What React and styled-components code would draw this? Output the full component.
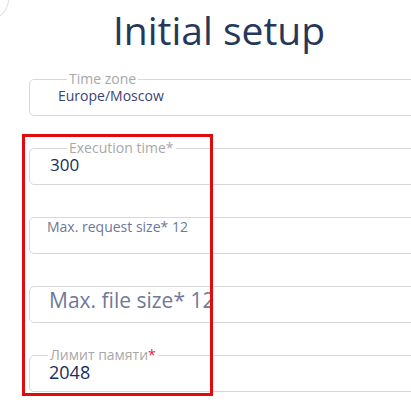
import React from 'react';
import styled, { createGlobalStyle } from 'styled-components';

const GlobalStyle = createGlobalStyle`
	html, body {
		margin: 0;
		padding: 0;
		background: #fff;
		overflow: hidden;
	}
	body {
		font-family: "Open Sans", "Noto Sans", sans-serif;
	}
`;

const Page = styled.div`
	position: relative;
	width: 411px;
	height: 409px;
	overflow: hidden;
`;

const CornerButton = styled.div`
	position: absolute;
	left: -35px;
	top: -23px;
	width: 42px;
	height: 42px;
	border-radius: 50%;
	border: 1px solid #dcdcdc;
`;

const Title = styled.h1`
	margin: 6px 0 0;
	padding-left: 27px;
	text-align: center;
	font-size: 39px;
	line-height: 48px;
	font-weight: 400;
	color: #263859;
`;

const Form = styled.div`
	display: flex;
	flex-direction: column;
	gap: 32px;
	margin-top: 25px;
	padding-left: 29px;
`;

const Box = styled.div`
	position: relative;
	box-sizing: border-box;
	width: 460px;
	height: 37px;
	border: 1px solid #d8d8d8;
	border-radius: 5px;
	display: flex;
	align-items: flex-start;
	padding-left: ${p => p.$pad}px;
	padding-top: ${p => p.$top}px;
`;

const Label = styled.span`
	position: absolute;
	top: -9px;
	left: ${p => p.$left}px;
	padding: 0 2px;
	background: #fff;
	font-size: 14px;
	line-height: 15px;
	color: #a8a8a8;
	white-space: nowrap;
`;

const Star = styled.span`
	color: #e8173a;
`;

const Value = styled.span`
	font-size: ${p => p.$size}px;
	line-height: ${p => p.$lh || 1.3};
	color: ${p => p.$color};
	white-space: nowrap;
`;

const Clipped = styled(Value)`
	max-width: ${p => p.$clip}px;
	overflow: hidden;
`;

const Highlight = styled.div`
	position: absolute;
	left: 22px;
	top: 134px;
	width: 185px;
	height: 256px;
	border: 3px solid #e20a0a;
	pointer-events: none;
`;

const App = () => {
	return (
		<Page>
			<GlobalStyle />
			<CornerButton />
			<Title>Initial setup</Title>
			<Form>
				<Box $pad={28} $top={7}>
					<Label $left={37}>Time zone</Label>
					<Value $size={14} $color="#3c4374">Europe/Moscow</Value>
				</Box>
				<Box $pad={20} $top={5}>
					<Label $left={37}>Execution time*</Label>
					<Value $size={17} $color="#1c2b5a">300</Value>
				</Box>
				<Box $pad={17} $top={0}>
					<Value $size={14} $color="#6f7898">Max. request size* 12</Value>
				</Box>
				<Box $pad={19} $top={-4}>
					<Clipped $size={21} $color="#6f7898" $clip={162}>Max. file size* 12</Clipped>
				</Box>
				<Box $pad={19} $top={6}>
					<Label $left={18}>Лимит памяти<Star>*</Star></Label>
					<Value $size={18} $lh={1.2} $color="#1c2b5a">2048</Value>
				</Box>
			</Form>
			<Highlight />
		</Page>
	);
};

export default App;
